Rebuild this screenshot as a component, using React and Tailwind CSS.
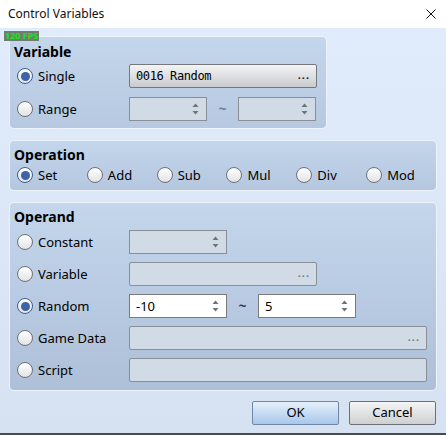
import React from 'react';

const font = { fontFamily: '"Noto Sans", "Open Sans", sans-serif' };

function Radio({ checked, label, className = '' }) {
  return (
    <div className={`flex items-center gap-[5px] ${className}`}>
      <span
        className={`flex h-[16px] w-[16px] shrink-0 items-center justify-center rounded-full border bg-gradient-to-b from-white to-[#e1e3e6] ${
          checked ? 'border-[#3f5f92]' : 'border-[#6e7176]'
        }`}
      >
        {checked && <span className="h-[9px] w-[9px] rounded-full bg-[#3d63aa]" />}
      </span>
      <span className="text-[13px] leading-none text-black">{label}</span>
    </div>
  );
}

function Arrows() {
  return (
    <svg width="7" height="14" viewBox="0 0 7 14" className="shrink-0">
      <path d="M3.5 1.5 L6.5 5 L0.5 5 Z" fill="#6f7276" />
      <path d="M0.5 9 L6.5 9 L3.5 12.5 Z" fill="#6f7276" />
    </svg>
  );
}

function Spin({ width, value, enabled }) {
  return (
    <div
      className={`flex h-[24px] items-center justify-between border pl-[6px] pr-[7px] ${
        enabled ? 'border-[#7a7a7a] bg-white' : 'border-[#8a8f96] bg-[#d0dbe6]'
      }`}
      style={{ width }}
    >
      <span className="text-[13px] leading-none text-black">{value}</span>
      <Arrows />
    </div>
  );
}

function Dots({ color }) {
  return <span className={`pb-[3px] text-[11px] font-bold leading-none tracking-[1px] ${color}`}>...</span>;
}

export default function App() {
  return (
    <div className="relative flex h-[436px] w-[446px] flex-col overflow-hidden bg-white" style={font}>
      <div className="flex h-[28px] shrink-0 items-center justify-between bg-white pl-[8px] pr-[10px]">
        <span className="text-[12px] text-[#111]">Control Variables</span>
        <svg width="10" height="10" viewBox="0 0 10 10">
          <path d="M0.5 0.5 L9.5 9.5 M9.5 0.5 L0.5 9.5" stroke="#111" strokeWidth="1" />
        </svg>
      </div>

      <div className="relative flex h-[405px] shrink-0 flex-col bg-gradient-to-b from-[#e0ecfb] to-[#d6e2f1] pl-[9px] pt-[8px]">
        <div className="absolute left-[4px] top-[3px] bg-[#6f7d70] px-[1px] text-[9px] font-bold leading-[10px] text-[#1fe01f]">
          120 FPS
        </div>

        {/* Variable */}
        <div className="h-[93px] w-[318px] rounded-[5px] border border-[#edf3fb] bg-gradient-to-b from-[#c3d6ec] to-[#b6c9e0] pl-[4px] pt-[8px]">
          <div className="text-[14px] font-bold leading-[14px] text-black">Variable</div>
          <div className="ml-[3px] mt-[5px] flex h-[24px] items-center">
            <Radio checked label="Single" className="w-[112px]" />
            <div className="flex h-[24px] w-[188px] items-center justify-between rounded-[2px] border border-[#75787c] bg-gradient-to-b from-[#f4f4f4] to-[#c8cbcf] pl-[6px] pr-[6px]">
              <span className="text-[12px] leading-none text-black" style={{ fontFamily: '"DejaVu Sans Mono", monospace', letterSpacing: '-0.4px' }}>
                0016 Random
              </span>
              <Dots color="text-[#222]" />
            </div>
          </div>
          <div className="ml-[3px] mt-[9px] flex h-[24px] items-center">
            <Radio label="Range" className="w-[112px]" />
            <Spin width={78} value="" />
            <span className="w-[31px] text-center text-[14px] font-bold leading-none text-[#6b7f99]">~</span>
            <Spin width={78} value="" />
          </div>
        </div>

        {/* Operation */}
        <div className="mt-[11px] h-[51px] w-[428px] rounded-[5px] border border-[#edf3fb] bg-gradient-to-b from-[#c3d6ec] to-[#b4c7df] pl-[4px] pt-[7px]">
          <div className="text-[14px] font-bold leading-[14px] text-black">Operation</div>
          <div className="ml-[3px] mt-[5px] flex">
            <Radio checked label="Set" className="w-[70px]" />
            <Radio label="Add" className="w-[70px]" />
            <Radio label="Sub" className="w-[70px]" />
            <Radio label="Mul" className="w-[70px]" />
            <Radio label="Div" className="w-[70px]" />
            <Radio label="Mod" className="w-[70px]" />
          </div>
        </div>

        {/* Operand */}
        <div className="mt-[11px] flex h-[189px] w-[428px] flex-col gap-[8px] rounded-[5px] border border-[#edf3fb] bg-gradient-to-b from-[#c3d6ec] to-[#aec0d8] pl-[4px] pt-[7px]">
          <div className="mb-[-2px] text-[14px] font-bold leading-[14px] text-black">Operand</div>
          <div className="ml-[3px] flex h-[24px] items-center">
            <Radio label="Constant" className="w-[112px]" />
            <Spin width={98} value="" />
          </div>
          <div className="ml-[3px] flex h-[24px] items-center">
            <Radio label="Variable" className="w-[112px]" />
            <div className="flex h-[24px] w-[188px] items-center justify-end rounded-[2px] border border-[#8a8f96] bg-[#d0dbe6] pr-[6px]">
              <Dots color="text-[#777b80]" />
            </div>
          </div>
          <div className="ml-[3px] flex h-[24px] items-center">
            <Radio checked label="Random" className="w-[112px]" />
            <Spin width={98} value="-10" enabled />
            <span className="w-[31px] text-center text-[14px] font-bold leading-none text-[#2a3f66]">~</span>
            <Spin width={98} value="5" enabled />
          </div>
          <div className="ml-[3px] flex h-[24px] items-center">
            <Radio label="Game Data" className="w-[112px]" />
            <div className="flex h-[24px] w-[298px] items-center justify-end rounded-[2px] border border-[#8a8f96] bg-[#d0dbe6] pr-[6px]">
              <Dots color="text-[#777b80]" />
            </div>
          </div>
          <div className="ml-[3px] flex h-[24px] items-center">
            <Radio label="Script" className="w-[112px]" />
            <div className="h-[24px] w-[298px] rounded-[2px] border border-[#8a8f96] bg-[#d0dbe6]" />
          </div>
        </div>

        <div className="mt-[10px] flex justify-end gap-[10px] pr-[10px]">
          <button className="flex h-[24px] w-[87px] items-center justify-center rounded-[2px] border border-[#6f86a6] bg-gradient-to-b from-[#e6f0fb] to-[#a9c7ea] text-[13px] text-black">
            OK
          </button>
          <button className="flex h-[24px] w-[87px] items-center justify-center rounded-[2px] border border-[#707070] bg-gradient-to-b from-[#f4f4f4] to-[#cdd0d3] text-[13px] text-black">
            Cancel
          </button>
        </div>
      </div>
      <div className="h-[2px] shrink-0 bg-[#4a4a4a]" />
    </div>
  );
}
